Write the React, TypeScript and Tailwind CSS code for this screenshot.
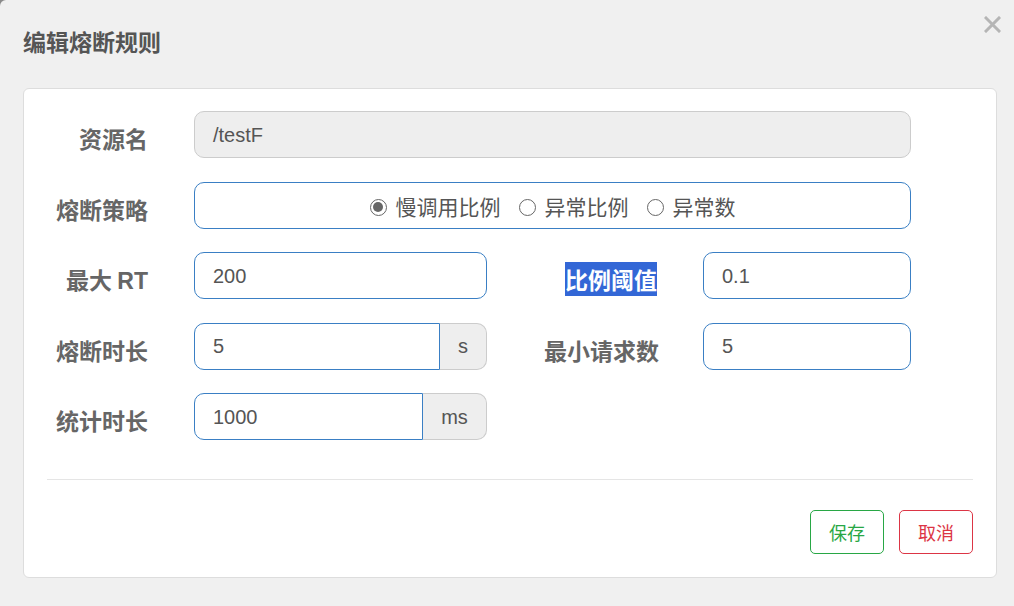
import React from "react";

const cjk = { fontFamily: '"Noto Sans CJK SC", "Liberation Sans", sans-serif' };
const latin = { fontFamily: '"Liberation Sans", "Noto Sans CJK SC", sans-serif' };

function Label({ children, w, highlight }: { children: React.ReactNode; w: string; highlight?: boolean }) {
  return (
    <div className={`${w} shrink-0 text-right pt-[11px] text-[23px] leading-[33px] font-bold text-[#666]`} style={cjk}>
      {highlight ? <span className="bg-[#3367d6] text-white">{children}</span> : children}
    </div>
  );
}

function Input({ value, w, gray }: { value: string; w: string; gray?: boolean }) {
  return (
    <div
      className={`${w} h-[47px] shrink-0 rounded-[10px] border flex items-center pl-[18px] text-[20px] text-[#555] ${
        gray ? "bg-[#eeeeee] border-[#cccccc]" : "bg-white border-[#3a7fc4]"
      }`}
      style={latin}
    >
      {value}
    </div>
  );
}

function AddonInput({ value, w, addon, addonW }: { value: string; w: string; addon: string; addonW: string }) {
  return (
    <div className={`${w} h-[47px] shrink-0 flex`}>
      <div
        className="flex-1 h-full rounded-l-[10px] border border-[#3a7fc4] bg-white flex items-center pl-[18px] text-[20px] text-[#555]"
        style={latin}
      >
        {value}
      </div>
      <div
        className={`${addonW} h-full rounded-r-[10px] border border-l-0 border-[#cccccc] bg-[#eeeeee] flex items-center justify-center text-[20px] text-[#555]`}
        style={latin}
      >
        {addon}
      </div>
    </div>
  );
}

function Radio({ checked, label }: { checked?: boolean; label: string }) {
  return (
    <div className="flex items-center">
      <span className="w-[17px] h-[17px] rounded-full border-[1.5px] border-[#666] flex items-center justify-center bg-white">
        {checked && <span className="w-[10px] h-[10px] rounded-full bg-[#666]" />}
      </span>
      <span className="ml-[9px] text-[21px] text-[#555]" style={cjk}>
        {label}
      </span>
    </div>
  );
}

export default function App() {
  return (
    <div className="w-[1014px] h-[606px] bg-[#8a8a8a] overflow-hidden">
      <div className="w-full h-full bg-[#f0f0f0] rounded-tl-[6px] relative">
        <div className="absolute right-[13px] top-[16px]">
          <svg width="17" height="17" viewBox="0 0 17 17">
            <path d="M2 2 L15 15 M15 2 L2 15" stroke="#b5b5b5" strokeWidth="3" strokeLinecap="square" />
          </svg>
        </div>
        <div className="pl-[23px] pt-[25px]">
          <div className="h-[32px] leading-[32px] text-[23px] font-bold text-[#555]" style={cjk}>
            编辑熔断规则
          </div>
        </div>
        <div className="ml-[23px] mt-[31px] w-[974px] h-[490px] bg-white border border-[#dddddd] rounded-[6px] px-[23px] pt-[22px]">
          <div className="flex flex-col gap-[23.5px]">
            <div className="flex">
              <Label w="w-[101px]">资源名</Label>
              <div className="ml-[46px]">
                <Input value="/testF" w="w-[717px]" gray />
              </div>
            </div>
            <div className="flex">
              <Label w="w-[101px]">熔断策略</Label>
              <div className="ml-[46px] w-[717px] h-[47px] rounded-[10px] border border-[#3a7fc4] flex items-center justify-center gap-[18px] pt-[4px]">
                <Radio checked label="慢调用比例" />
                <Radio label="异常比例" />
                <Radio label="异常数" />
              </div>
            </div>
            <div className="flex">
              <Label w="w-[101px]">
                最大 <span style={latin}>RT</span>
              </Label>
              <div className="ml-[46px]">
                <Input value="200" w="w-[293px]" />
              </div>
              <Label w="w-[170px]" highlight>
                比例阈值
              </Label>
              <div className="ml-[46px]">
                <Input value="0.1" w="w-[208px]" />
              </div>
            </div>
            <div className="flex">
              <Label w="w-[101px]">熔断时长</Label>
              <div className="ml-[46px]">
                <AddonInput value="5" w="w-[293px]" addon="s" addonW="w-[47px]" />
              </div>
              <Label w="w-[172px]">最小请求数</Label>
              <div className="ml-[44px]">
                <Input value="5" w="w-[208px]" />
              </div>
            </div>
            <div className="flex">
              <Label w="w-[101px]">统计时长</Label>
              <div className="ml-[46px]">
                <AddonInput value="1000" w="w-[293px]" addon="ms" addonW="w-[64px]" />
              </div>
            </div>
          </div>
          <div className="mt-[39px] h-px bg-[#e5e5e5]" />
          <div className="mt-[30px] flex justify-end gap-[15px]">
            <div
              className="w-[74px] h-[44px] rounded-[5px] border border-[#28a745] text-[#28a745] flex items-center justify-center text-[18px]"
              style={cjk}
            >
              保存
            </div>
            <div
              className="w-[74px] h-[44px] rounded-[5px] border border-[#dc3545] text-[#dc3545] flex items-center justify-center text-[18px]"
              style={cjk}
            >
              取消
            </div>
          </div>
        </div>
      </div>
    </div>
  );
}
